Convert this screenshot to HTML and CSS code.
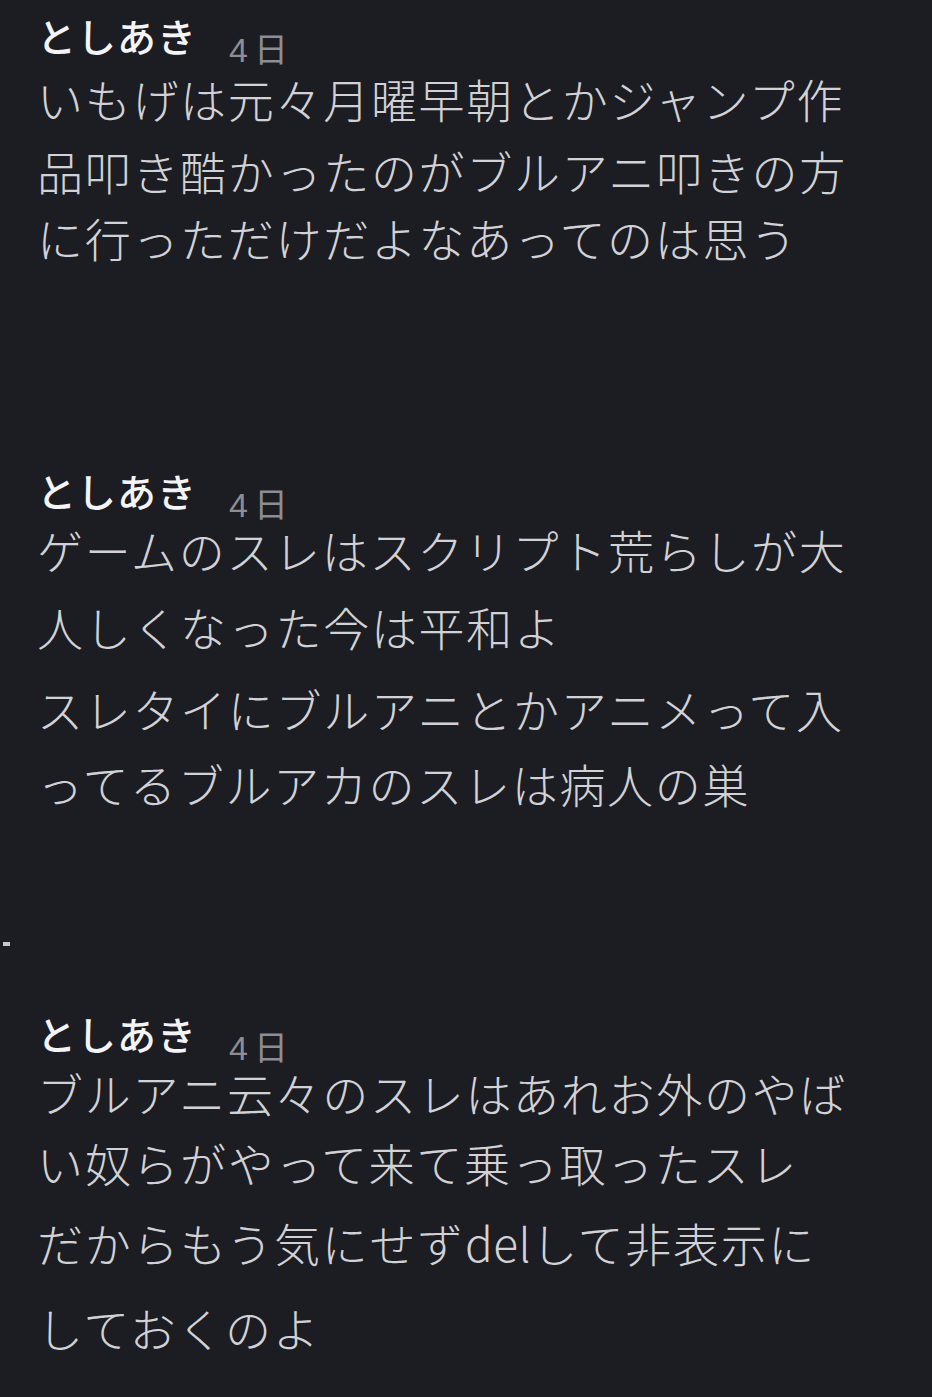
FILE: index.html
```html
<!DOCTYPE html>
<html lang="ja">
<head>
<meta charset="utf-8">
<title>としあき</title>
<link rel="stylesheet" href="styles.css">
</head>
<body>
<div class="feed">
  <section class="msg msg-first">
    <div class="head"><span class="name">としあき</span><span class="date">4日</span></div>
    <div class="line g9">いもげは元々月曜早朝とかジャンプ作</div>
    <div class="line g12">品叩き酷かったのがブルアニ叩きの方</div>
    <div class="line g7">に行っただけだよなあってのは思う</div>
  </section>

  <section class="msg msg-next">
    <div class="head"><span class="name">としあき</span><span class="date">4日</span></div>
    <div class="line g5">ゲームのスレはスクリプト荒らしが大</div>
    <div class="line g17">人しくなった今は平和よ</div>
    <div class="line g22">スレタイにブルアニとかアニメって入</div>
    <div class="line g15">ってるブルアカのスレは病人の巣</div>
  </section>

  <div class="dash"></div>

  <section class="msg msg-last">
    <div class="head"><span class="name">としあき</span><span class="date">4日</span></div>
    <div class="line g5">ブルアニ云々のスレはあれお外のやば</div>
    <div class="line g10">い奴らがやって来て乗っ取ったスレ</div>
    <div class="line g16">だからもう気にせず<span class="latin">del</span>して非表示に</div>
    <div class="line g29">しておくのよ</div>
  </section>
</div>
</body>
</html>
```

FILE: styles.css
```css
html, body {
  margin: 0;
  padding: 0;
  background: #1c1d22;
}
body {
  width: 932px;
  height: 1397px;
  overflow: hidden;
  font-family: "Noto Sans CJK JP", "Noto Sans", sans-serif;
}
.feed {
  display: flex;
  flex-direction: column;
  padding-top: 13px;
}
.msg {
  display: flex;
  flex-direction: column;
  padding-left: 37px;
}
.msg-next {
  margin-top: 197px;
}
.dash {
  width: 7px;
  height: 4px;
  margin: 125px 0 65px 3px;
  background: #c8c8cc;
}
.head {
  display: flex;
  align-items: flex-end;
  height: 50px;
}
.name {
  font-size: 39px;
  line-height: 44px;
  font-weight: 500;
  letter-spacing: 1px;
  color: #f4f4f6;
  margin-bottom: 6px;
}
.date {
  font-family: "Liberation Sans", "Noto Sans CJK JP", sans-serif;
  font-size: 34px;
  line-height: 26px;
  letter-spacing: 6px;
  color: #8d8d93;
  margin-left: 32px;
}
.line {
  font-family: "Liberation Sans", "Noto Sans CJK JP", sans-serif;
  font-size: 46px;
  line-height: 60px;
  height: 60px;
  font-weight: 300;
  letter-spacing: 1.7px;
  color: #d2d2d6;
  white-space: nowrap;
}
.latin {
  font-family: "Noto Sans CJK JP", sans-serif;
  font-weight: 300;
  letter-spacing: 0.5px;
}
.g5 { margin-top: 5px; }
.g7 { margin-top: 7px; }
.g9 { margin-top: 9px; }
.g10 { margin-top: 10px; }
.g12 { margin-top: 12px; }
.g15 { margin-top: 15px; }
.g16 { margin-top: 16px; }
.g17 { margin-top: 17px; }
.g22 { margin-top: 22px; }
.g29 { margin-top: 29px; }
```
